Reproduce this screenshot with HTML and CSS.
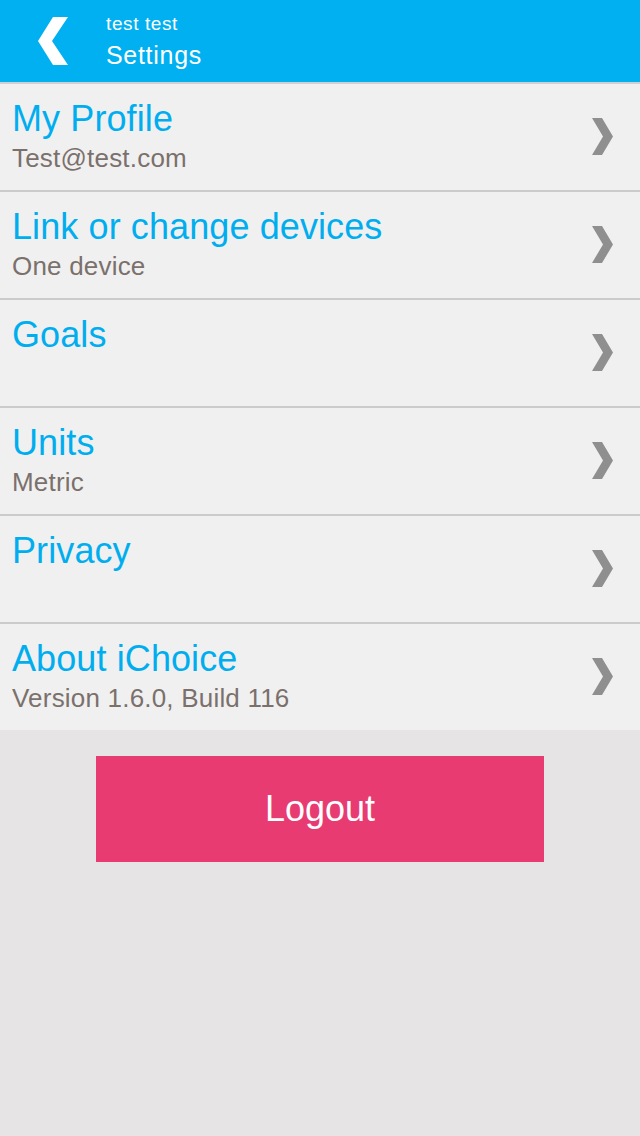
FILE: index.html
```html
<!DOCTYPE html>
<html lang="en">
<head>
  <meta charset="UTF-8">
  <title>Settings</title>
  <link rel="stylesheet" href="styles.css">
</head>
<body>
  <div class="topbar">
    <a class="back" href="#">
      <svg width="32" height="50" viewBox="0 0 32 50">
        <polygon points="15,0 30,0 14,24 30,48 15,48 0,24" fill="#fff"/>
      </svg>
    </a>
    <div class="topbar-text">
      <div class="user">test test</div>
      <div class="title">Settings</div>
    </div>
  </div>

  <ul class="menu">
    <li class="item">
      <div class="texts">
        <div class="label">My Profile</div>
        <div class="sub">Test@test.com</div>
      </div>
      <svg class="arrow" width="22" height="38" viewBox="0 0 22 38"><polygon points="0,0 10,0 21,18.5 10,37 0,37 11,18.5" fill="#8f8f8f"/></svg>
    </li>
    <li class="item">
      <div class="texts">
        <div class="label">Link or change devices</div>
        <div class="sub">One device</div>
      </div>
      <svg class="arrow" width="22" height="38" viewBox="0 0 22 38"><polygon points="0,0 10,0 21,18.5 10,37 0,37 11,18.5" fill="#8f8f8f"/></svg>
    </li>
    <li class="item">
      <div class="texts">
        <div class="label">Goals</div>
        <div class="sub"></div>
      </div>
      <svg class="arrow" width="22" height="38" viewBox="0 0 22 38"><polygon points="0,0 10,0 21,18.5 10,37 0,37 11,18.5" fill="#8f8f8f"/></svg>
    </li>
    <li class="item">
      <div class="texts">
        <div class="label">Units</div>
        <div class="sub">Metric</div>
      </div>
      <svg class="arrow" width="22" height="38" viewBox="0 0 22 38"><polygon points="0,0 10,0 21,18.5 10,37 0,37 11,18.5" fill="#8f8f8f"/></svg>
    </li>
    <li class="item">
      <div class="texts">
        <div class="label">Privacy</div>
        <div class="sub"></div>
      </div>
      <svg class="arrow" width="22" height="38" viewBox="0 0 22 38"><polygon points="0,0 10,0 21,18.5 10,37 0,37 11,18.5" fill="#8f8f8f"/></svg>
    </li>
    <li class="item">
      <div class="texts">
        <div class="label">About iChoice</div>
        <div class="sub">Version 1.6.0, Build 116</div>
      </div>
      <svg class="arrow" width="22" height="38" viewBox="0 0 22 38"><polygon points="0,0 10,0 21,18.5 10,37 0,37 11,18.5" fill="#8f8f8f"/></svg>
    </li>
  </ul>

  <div class="actions">
    <button class="logout">Logout</button>
  </div>
</body>
</html>
```

FILE: styles.css
```css
body {
  margin: 0;
  font-family: "Liberation Sans", Arial, sans-serif;
  background-color: #e6e4e5;
  min-height: 1136px;
}
.topbar {
  height: 82px;
  background-color: #00b0f0;
  border-bottom: 2px solid #d0d0d0;
  display: flex;
  align-items: center;
  color: white;
}
.back {
  display: flex;
  margin-left: 38px;
  margin-top: 1px;
  width: 68px;
}
.topbar-text {
  display: flex;
  flex-direction: column;
}
.user {
  font-size: 19px;
  line-height: 22px;
  letter-spacing: 0.6px;
  margin-top: 0;
}
.title {
  font-size: 25px;
  line-height: 30px;
  letter-spacing: 0.7px;
  margin-top: 5px;
}
.menu {
  list-style: none;
  margin: 0;
  padding: 0;
  background: #f0f0f0;
}
.item {
  height: 106px;
  display: flex;
  align-items: center;
  justify-content: space-between;
  border-bottom: 2px solid #cbcbcb;
  padding: 0 26px 0 12px;
}
.item:last-child {
  border-bottom: none;
}
.texts {
  align-self: flex-start;
  padding-top: 15px;
}
.label {
  color: #00aeef;
  font-size: 36px;
  line-height: 40px;
  letter-spacing: 0.1px;
}
.sub {
  color: #7b706c;
  font-size: 26px;
  line-height: 30px;
  letter-spacing: 0.2px;
  margin-top: 4px;
  min-height: 30px;
}
.actions {
  display: flex;
  justify-content: center;
  padding-top: 26px;
}
.logout {
  width: 448px;
  height: 106px;
  background-color: #e73b72;
  color: white;
  border: none;
  font-family: "Liberation Sans", Arial, sans-serif;
  font-size: 36px;
  cursor: pointer;
}
```
